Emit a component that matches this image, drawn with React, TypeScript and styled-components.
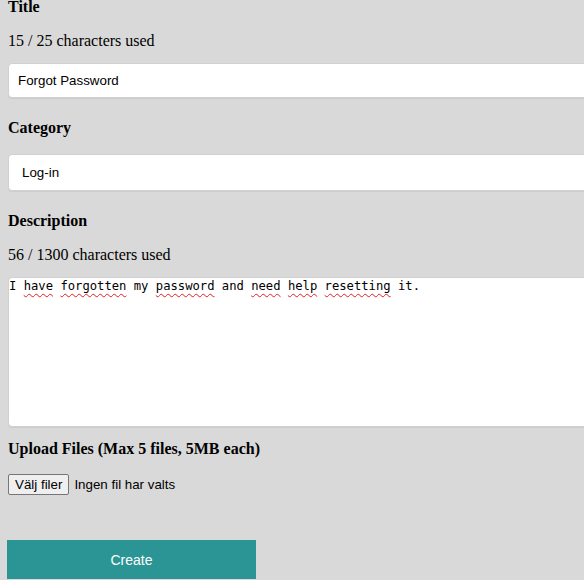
import React from "react";
import styled, { createGlobalStyle } from "styled-components";

const Global = createGlobalStyle`
  html, body {
    margin: 0;
    padding: 0;
    background: #d9d9d9;
    overflow: hidden;
  }
  body {
    font-family: "Liberation Serif", "Times New Roman", serif;
    color: #000;
  }
`;

const Form = styled.form`
  display: flex;
  flex-direction: column;
  align-items: flex-start;
  padding: 0 8px;
  width: 640px;
`;

const Field = styled.div<{ $gap: number }>`
  display: flex;
  flex-direction: column;
  align-items: stretch;
  align-self: stretch;
  margin-top: ${(p) => p.$gap}px;
`;

const Label = styled.label<{ $lh?: number }>`
  display: block;
  font-family: "Liberation Serif", "Times New Roman", serif;
  font-weight: bold;
  font-size: 16px;
  line-height: ${(p) => p.$lh ?? 18}px;
`;

const Counter = styled.p<{ $gap?: number }>`
  margin: ${(p) => p.$gap ?? 16}px 0 0;
  font-size: 16px;
  line-height: 18px;
`;

const boxBase = `
  box-sizing: border-box;
  background: #fff;
  border: 1px solid #d0d0d0;
  border-radius: 4px;
  box-shadow: 0 1px 1px rgba(0, 0, 0, 0.06);
  font-family: "Liberation Sans", Arial, sans-serif;
  font-size: 13.33px;
  color: #000;
  outline: none;
  width: 100%;
`;

const TextInput = styled.input<{ $gap: number }>`
  ${boxBase}
  height: 35px;
  margin-top: ${(p) => p.$gap}px;
  padding: 0 9px;
`;

const Select = styled.select<{ $gap: number }>`
  ${boxBase}
  appearance: none;
  -webkit-appearance: none;
  height: 37px;
  margin-top: ${(p) => p.$gap}px;
  padding: 0 13px;
`;

const TextBox = styled.div<{ $gap: number }>`
  ${boxBase}
  height: 150px;
  margin-top: ${(p) => p.$gap}px;
  padding: 1px 0 0 0;
  font-family: "DejaVu Sans Mono", "Liberation Mono", monospace;
  font-size: 12.2px;
  line-height: 15px;
  white-space: pre-wrap;
`;

const Misspelled = styled.span`
  text-decoration: underline wavy #e02020;
  text-decoration-thickness: 1px;
  text-underline-offset: 3px;
  text-decoration-skip-ink: none;
`;

const FileRow = styled.div`
  display: flex;
  align-items: center;
  gap: 5px;
  margin-top: 16px;
  font-family: "Liberation Sans", Arial, sans-serif;
  font-size: 13.33px;
`;

const FileButton = styled.button`
  box-sizing: border-box;
  height: 21px;
  padding: 0 6px;
  background: #efefef;
  border: 1px solid #767676;
  border-radius: 2px;
  font-family: "Liberation Sans", Arial, sans-serif;
  font-size: 13.33px;
  color: #000;
`;

const FileStatus = styled.span`
  color: #000;
`;

const CreateButton = styled.button`
  box-sizing: border-box;
  margin-top: 45px;
  margin-left: -1px;
  width: 249px;
  height: 39px;
  border: none;
  background: #2b9494;
  color: #fff;
  font-family: "Liberation Sans", Arial, sans-serif;
  font-size: 14px;
`;

const words: Array<[string, boolean]> = [
  ["I", false],
  [" ", false],
  ["have", true],
  [" ", false],
  ["forgotten", true],
  [" my ", false],
  ["password", true],
  [" and ", false],
  ["need", true],
  [" ", false],
  ["help", true],
  [" ", false],
  ["resetting", true],
  [" it.", false],
];

export default function App() {
  return (
    <>
      <Global />
      <Form onSubmit={(e) => e.preventDefault()}>
        <Field $gap={0}>
          <Label htmlFor="title" $lh={14}>Title</Label>
          <Counter $gap={18}>15 / 25 characters used</Counter>
          <TextInput id="title" $gap={13} defaultValue="Forgot Password" />
        </Field>
        <Field $gap={21}>
          <Label htmlFor="category">Category</Label>
          <Select id="category" $gap={17} defaultValue="login">
            <option value="login">Log-in</option>
          </Select>
        </Field>
        <Field $gap={21}>
          <Label>Description</Label>
          <Counter>56 / 1300 characters used</Counter>
          <TextBox $gap={13} role="textbox" aria-multiline="true">
            {words.map(([w, bad], i) =>
              bad ? <Misspelled key={i}>{w}</Misspelled> : <React.Fragment key={i}>{w}</React.Fragment>
            )}
          </TextBox>
        </Field>
        <Field $gap={13}>
          <Label>Upload Files (Max 5 files, 5MB each)</Label>
          <FileRow>
            <FileButton type="button">Välj filer</FileButton>
            <FileStatus>Ingen fil har valts</FileStatus>
          </FileRow>
        </Field>
        <CreateButton type="submit">Create</CreateButton>
      </Form>
    </>
  );
}
